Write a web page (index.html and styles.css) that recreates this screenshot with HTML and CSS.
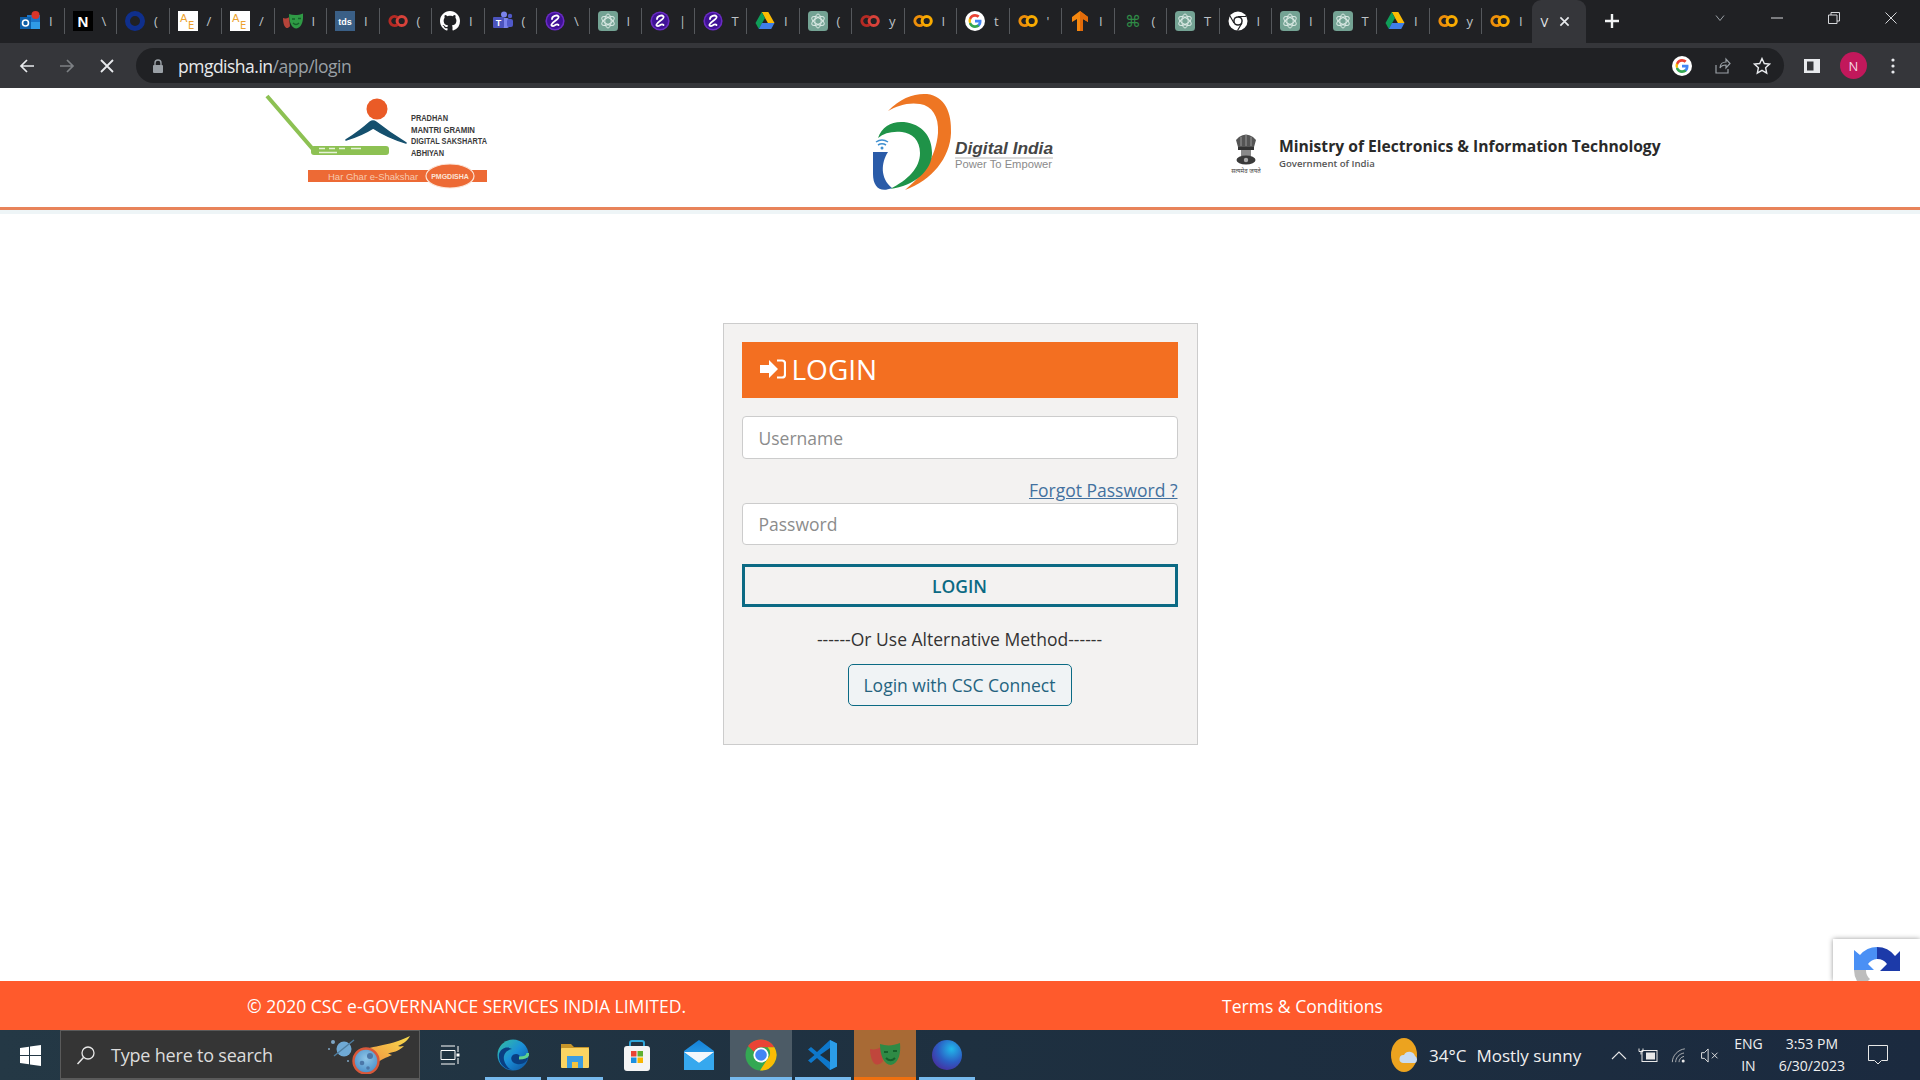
FILE: index.html
```html
<!DOCTYPE html>
<html lang="en">
<head>
  <meta charset="UTF-8" />
  <title>PMGDISHA Login</title>
  <link rel="stylesheet" href="styles.css">
</head>
<body>
  <!-- shared icons -->
  <svg class="sprite" xmlns="http://www.w3.org/2000/svg">
    <defs>
      <linearGradient id="edgeGrad" x1="0" y1="0" x2="1" y2="1"><stop offset="0" stop-color="#35c1a0"/><stop offset=".5" stop-color="#1b8fd8"/><stop offset="1" stop-color="#0c4f9c"/></linearGradient>
      <linearGradient id="cometGrad" x1="1" y1="0" x2="0" y2="1"><stop offset="0" stop-color="#f7dc4d"/><stop offset="1" stop-color="#f07a3c"/></linearGradient>
      <radialGradient id="globeGrad" cx=".65" cy=".3" r=".8"><stop offset="0" stop-color="#21b8ea"/><stop offset=".55" stop-color="#2b5fc4"/><stop offset="1" stop-color="#4a2a9c"/></radialGradient>
      <radialGradient id="rockGrad" cx=".5" cy=".4" r=".7"><stop offset="0" stop-color="#8fc6e8"/><stop offset="1" stop-color="#3f86c4"/></radialGradient>
      <linearGradient id="mailGrad" x1="0" y1="0" x2="0" y2="1"><stop offset="0" stop-color="#1380d8"/><stop offset="1" stop-color="#3fb4f2"/></linearGradient>
    </defs>
    <symbol id="i-outlook" viewBox="0 0 20 20"><rect x="7" y="4" width="13" height="14" fill="#1a74c8"/><rect x="0" y="6" width="11" height="12" fill="#0f5fa8"/><circle cx="5.5" cy="12" r="3" fill="none" stroke="#fff" stroke-width="1.6"/><path d="M11 11h9v7H11z" fill="#2f9be6"/><circle cx="15.5" cy="4" r="4" fill="#d8352a"/></symbol>
    <symbol id="i-ring" viewBox="0 0 20 20"><circle cx="10" cy="10" r="7.5" fill="none" stroke="#0f2f8c" stroke-width="5"/></symbol>
    <symbol id="i-es" viewBox="0 0 20 20"><path d="M0 7c2 .8 4 .4 6-.8l1 9c-2 2-3 2-4 1.500C1 15.500 0 11 0 7z" fill="#b5443a"/><path d="M6 3c4 1.500 9 1.500 14-.5.5 7-1 14-6.500 15C8.500 17.500 6 10.500 6 3z" fill="#2f9a45"/><path d="M9 8h3M15 7.500h3" stroke="#16602a" stroke-width="1.500"/><path d="M10 12c2 2 4 2 6 0" fill="none" stroke="#16602a" stroke-width="1.500"/></symbol>
    <symbol id="i-colab-red" viewBox="0 0 20 20"><circle cx="13.700" cy="10" r="4.600" fill="none" stroke="#d8423a" stroke-width="3"/><path d="M9.700 6.700a4.600 4.600 0 1 0 0 6.600" fill="none" stroke="#b52a24" stroke-width="3"/></symbol>
    <symbol id="i-colab" viewBox="0 0 20 20"><circle cx="13.700" cy="10" r="4.600" fill="none" stroke="#f9ab00" stroke-width="3"/><path d="M9.700 6.700a4.600 4.600 0 1 0 0 6.600" fill="none" stroke="#ee8f0a" stroke-width="3"/></symbol>
    <symbol id="i-github" viewBox="0 0 16 16"><path fill="#fff" d="M8 0C3.58 0 0 3.58 0 8c0 3.54 2.29 6.53 5.47 7.59.4.07.55-.17.55-.38 0-.19-.01-.82-.01-1.49-2.01.37-2.53-.49-2.69-.94-.09-.23-.48-.94-.82-1.13-.28-.15-.68-.52-.01-.53.63-.01 1.08.58 1.23.82.72 1.21 1.87.87 2.33.66.07-.52.28-.87.51-1.07-1.78-.2-3.64-.89-3.64-3.95 0-.87.31-1.59.82-2.15-.08-.2-.36-1.02.08-2.12 0 0 .67-.21 2.2.82.64-.18 1.32-.27 2-.27.68 0 1.36.09 2 .27 1.53-1.04 2.2-.82 2.2-.82.44 1.1.16 1.92.08 2.12.51.56.82 1.27.82 2.15 0 3.07-1.87 3.75-3.65 3.95.29.25.54.73.54 1.48 0 1.07-.01 1.93-.01 2.2 0 .21.15.46.55.38A8.013 8.013 0 0016 8c0-4.42-3.58-8-8-8z"/></symbol>
    <symbol id="i-purple" viewBox="0 0 20 20"><circle cx="10" cy="10" r="9.600" fill="#6a2bc4"/><circle cx="10" cy="10" r="8" fill="#3f1196"/><path d="M7 8c0-3 5-4.500 6.500-2.500C15 8 8 10 6.500 13.500c-.5 1.500 1.500 2 3 1 1.500-1 3-1.500 4-.5" fill="none" stroke="#fff" stroke-width="1.800" stroke-linecap="round"/></symbol>
    <symbol id="i-gpt" viewBox="0 0 20 20"><rect width="20" height="20" rx="3.500" fill="#74a394"/><g fill="none" stroke="#d9e8e3" stroke-width="1"><ellipse cx="10" cy="10" rx="3.200" ry="7"/><ellipse cx="10" cy="10" rx="3.200" ry="7" transform="rotate(60 10 10)"/><ellipse cx="10" cy="10" rx="3.200" ry="7" transform="rotate(120 10 10)"/></g></symbol>
    <symbol id="i-drive" viewBox="0 0 20 20"><path d="M6.700 1h6.600l6.200 11h-6.600z" fill="#fbbc04"/><path d="M6.700 1 .5 12l3.300 6L10 7z" fill="#0f9d58"/><path d="M3.800 18h12.400l3.300-6H7z" fill="#3f7ee8"/></symbol>
    <symbol id="i-g" viewBox="0 0 20 20"><circle cx="10" cy="10" r="10" fill="#fff"/><path d="M16.500 10.200c0-.5 0-1-.1-1.400H10v2.700h3.700c-.2.9-.7 1.600-1.400 2.100v1.700h2.300c1.200-1.200 1.900-3 1.900-5.100z" fill="#4285f4"/><path d="M10 17c1.900 0 3.400-.6 4.600-1.700l-2.300-1.700c-.6.400-1.400.7-2.300.7-1.800 0-3.300-1.200-3.900-2.800H4.100v1.800C5.200 15.500 7.400 17 10 17z" fill="#34a853"/><path d="M6.100 11.500c-.3-.9-.3-1.900 0-2.800V6.900H4.100c-.8 1.600-.8 3.500 0 5.200z" fill="#fbbc05"/><path d="M10 5.800c1 0 1.900.4 2.600 1l2-2C13.400 3.700 11.800 3 10 3 7.400 3 5.200 4.500 4.100 6.900l2 1.800c.6-1.700 2.100-2.900 3.900-2.900z" fill="#ea4335"/></symbol>
    <symbol id="i-tf" viewBox="0 0 20 20"><path d="M10 0 2 6v5l5-3v12h6V8l5 3V6z" fill="#f5870f"/><path d="M10 0v20h3V8l5 3V6z" fill="#e26b0a"/></symbol>
    <symbol id="i-chrome-mono" viewBox="0 0 20 20"><circle cx="10" cy="10" r="9.500" fill="#fff"/><circle cx="10" cy="10" r="4.800" fill="#202124"/><circle cx="10" cy="10" r="3.300" fill="#fff"/><path d="M10 5.500h8M6 12l-4-7M14 12l-4.500 7.500" stroke="#202124" stroke-width="1.200"/></symbol>
    <symbol id="i-chrome" viewBox="0 0 32 32"><circle cx="16" cy="16" r="15.500" fill="#34a853"/><path d="M16 .5A15.500 15.500 0 0 1 29.400 8.300H16a7.700 7.700 0 0 0-7 4.400L3 7A15.500 15.500 0 0 1 16 .5z" fill="#ea4335"/><path d="M29.400 8.300A15.500 15.500 0 0 1 15 31.500l7.600-11.800a7.700 7.700 0 0 0 0-11.400z" fill="#fbbc04"/><circle cx="16" cy="16" r="7.600" fill="#fff"/><circle cx="16" cy="16" r="5.800" fill="#4285f4"/></symbol>
  </svg>

  <div class="tabstrip">
    <div class="tab"><svg class="favicon"><use href="#i-outlook"/></svg><span>I</span></div>
    <div class="tab"><svg class="favicon" viewBox="0 0 20 20"><rect width="20" height="20" fill="#000"/><text x="10" y="15.500" text-anchor="middle" class="sv-bold" font-size="15" fill="#fff">N</text></svg><span>\</span></div>
    <div class="tab"><svg class="favicon"><use href="#i-ring"/></svg><span>(</span></div>
    <div class="tab"><svg class="favicon" viewBox="0 0 20 20"><rect width="20" height="20" fill="#fff"/><text x="2" y="11" class="sv-reg" font-size="11" fill="#eda22e">A</text><text x="10" y="18" class="sv-reg" font-size="10" fill="#eda22e">E</text></svg><span>/</span></div>
    <div class="tab"><svg class="favicon" viewBox="0 0 20 20"><rect width="20" height="20" fill="#fff"/><text x="2" y="11" class="sv-reg" font-size="11" fill="#eda22e">A</text><text x="10" y="18" class="sv-reg" font-size="10" fill="#eda22e">E</text></svg><span>/</span></div>
    <div class="tab"><svg class="favicon"><use href="#i-es"/></svg><span>I</span></div>
    <div class="tab"><svg class="favicon" viewBox="0 0 20 20"><rect width="20" height="20" fill="#3a5f86"/><text x="10" y="13.500" text-anchor="middle" class="sv-bold" font-size="9" fill="#fff">tds</text></svg><span>I</span></div>
    <div class="tab"><svg class="favicon"><use href="#i-colab-red"/></svg><span>(</span></div>
    <div class="tab"><svg class="favicon"><use href="#i-github"/></svg><span>I</span></div>
    <div class="tab"><svg class="favicon" viewBox="0 0 20 20"><circle cx="11" cy="3.500" r="3" fill="#7b83eb"/><circle cx="17" cy="5" r="2.200" fill="#5059c9"/><rect x="7" y="7" width="9" height="10" rx="2" fill="#7b83eb"/><rect x="14" y="8" width="6" height="8" rx="2" fill="#5059c9"/><rect y="6" width="11" height="11" rx="1" fill="#4b53bc"/><text x="5.500" y="15" text-anchor="middle" class="sv-bold" font-size="9" fill="#fff">T</text></svg><span>(</span></div>
    <div class="tab"><svg class="favicon"><use href="#i-purple"/></svg><span>\</span></div>
    <div class="tab"><svg class="favicon"><use href="#i-gpt"/></svg><span>I</span></div>
    <div class="tab"><svg class="favicon"><use href="#i-purple"/></svg><span>|</span></div>
    <div class="tab"><svg class="favicon"><use href="#i-purple"/></svg><span>T</span></div>
    <div class="tab"><svg class="favicon"><use href="#i-drive"/></svg><span>I</span></div>
    <div class="tab"><svg class="favicon"><use href="#i-gpt"/></svg><span>(</span></div>
    <div class="tab"><svg class="favicon"><use href="#i-colab-red"/></svg><span>y</span></div>
    <div class="tab"><svg class="favicon"><use href="#i-colab"/></svg><span>I</span></div>
    <div class="tab"><svg class="favicon"><use href="#i-g"/></svg><span>t</span></div>
    <div class="tab"><svg class="favicon"><use href="#i-colab"/></svg><span>'</span></div>
    <div class="tab"><svg class="favicon"><use href="#i-tf"/></svg><span>I</span></div>
    <div class="tab"><svg class="favicon" viewBox="0 0 20 20"><text x="10" y="16" text-anchor="middle" class="sv-reg" font-size="16" fill="#2f8a46">⌘</text></svg><span>(</span></div>
    <div class="tab"><svg class="favicon"><use href="#i-gpt"/></svg><span>T</span></div>
    <div class="tab"><svg class="favicon"><use href="#i-chrome-mono"/></svg><span>I</span></div>
    <div class="tab"><svg class="favicon"><use href="#i-gpt"/></svg><span>I</span></div>
    <div class="tab"><svg class="favicon"><use href="#i-gpt"/></svg><span>T</span></div>
    <div class="tab"><svg class="favicon"><use href="#i-drive"/></svg><span>I</span></div>
    <div class="tab"><svg class="favicon"><use href="#i-colab"/></svg><span>y</span></div>
    <div class="tab"><svg class="favicon"><use href="#i-colab"/></svg><span>I</span></div>
    <div class="tab-active"><span>V</span>
      <svg class="tab-close" viewBox="0 0 12 12"><path d="M1.500 1.500l9 9M10.500 1.500l-9 9" stroke="#e8eaed" stroke-width="1.800"/></svg>
    </div>
    <svg class="new-tab" viewBox="0 0 16 16"><path d="M8 1v14M1 8h14" stroke="#f1f3f4" stroke-width="2.400"/></svg>
    <div class="window-btns">
      <svg viewBox="0 0 12 12"><path d="M2 3.500l4 5 4-5" fill="none" stroke="#9aa0a6" stroke-width="1"/></svg>
      <svg viewBox="0 0 12 12"><path d="M0 6h12" stroke="#d5d7da" stroke-width="1"/></svg>
      <svg viewBox="0 0 12 12"><path d="M.5 3h8.500v8.500H.5zM3 3V.5h8.500V9H9" fill="none" stroke="#d5d7da" stroke-width="1"/></svg>
      <svg viewBox="0 0 12 12"><path d="M.5.500l11 11M11.500.500l-11 11" stroke="#d5d7da" stroke-width="1"/></svg>
    </div>
  </div>

  <div class="toolbar">
    <svg class="nav-icon" viewBox="0 0 16 16"><path d="M15 8H2M8 2 2 8l6 6" fill="none" stroke="#e8eaed" stroke-width="1.700"/></svg>
    <svg class="nav-icon" viewBox="0 0 16 16"><path d="M1 8h13M8 2l6 6-6 6" fill="none" stroke="#7d8084" stroke-width="1.700"/></svg>
    <svg class="nav-icon" viewBox="0 0 16 16"><path d="M2 2l12 12M14 2 2 14" stroke="#e8eaed" stroke-width="1.800"/></svg>
    <div class="omnibox">
      <svg class="lock" viewBox="0 0 12 14"><path d="M3 6V4a3 3 0 0 1 6 0v2" fill="none" stroke="#9aa0a6" stroke-width="1.400"/><rect x="1" y="6" width="10" height="8" rx="1" fill="#9aa0a6"/></svg>
      <div class="url"><b>pmgdisha.in</b>/app/login</div>
      <svg class="omni-g"><use href="#i-g"/></svg>
      <svg class="omni-icon" viewBox="0 0 18 18"><path d="M3 8v8h12v-4M7 11c0-4 3-6 6-6V2l4 4.500L13 11V8c-3 0-5 1-6 3z" fill="none" stroke="#9aa0a6" stroke-width="1.200"/></svg>
      <svg class="omni-icon" viewBox="0 0 18 18"><path d="M9 1.500l2.300 5 5.200.6-3.900 3.600 1.100 5.300L9 13.300 4.300 16l1.100-5.300L1.500 7.100l5.200-.6z" fill="none" stroke="#e8eaed" stroke-width="1.400"/></svg>
    </div>
    <svg class="panel-icon" viewBox="0 0 18 18"><path d="M1 2h16v14H1z" fill="#e8eaed"/><path d="M4 4.500h6.500v9H4z" fill="#35363a"/></svg>
    <div class="avatar">N</div>
    <svg class="kebab" viewBox="0 0 4 16"><circle cx="2" cy="2" r="1.600" fill="#e8eaed"/><circle cx="2" cy="8" r="1.600" fill="#e8eaed"/><circle cx="2" cy="14" r="1.600" fill="#e8eaed"/></svg>
  </div>

  <header class="site-header">
    <svg class="logo-pmg" viewBox="0 0 250 105">
      <path d="M12 6 56 57q2 3 6 3h67" fill="none" stroke="#8dc153" stroke-width="4"/>
      <rect x="56" y="56" width="78" height="9" rx="3" fill="#8dc153"/>
      <path d="M64 58.500h6M74 58.500h6M84 58.500h6M96 58.500h10M64 62.500h18" stroke="#e6f2d8" stroke-width="1.400"/>
      <circle cx="122" cy="19" r="10.500" fill="#ea5b27"/>
      <path d="M91 50q14-9 24-18 3-2 6 0 14 11 30 21-18-5-33-15-11 7-27 12z" fill="#15506e" stroke="#15506e" stroke-width="1.500" stroke-linejoin="round"/>
      <g class="pmg-text">
        <text x="156" y="31" textLength="37" lengthAdjust="spacingAndGlyphs">PRADHAN</text>
        <text x="156" y="42.500" textLength="64" lengthAdjust="spacingAndGlyphs">MANTRI GRAMIN</text>
        <text x="156" y="54" textLength="76" lengthAdjust="spacingAndGlyphs">DIGITAL SAKSHARTA</text>
        <text x="156" y="66" textLength="33" lengthAdjust="spacingAndGlyphs">ABHIYAN</text>
      </g>
      <rect x="53" y="80" width="179" height="12" fill="#ed6a35"/>
      <text x="73" y="89.500" class="pmg-tagline">Har Ghar e-Shakshar</text>
      <ellipse cx="195" cy="86" rx="24" ry="12" fill="#ed6a35" stroke="#fbe4d6" stroke-width="1.200"/>
      <text x="195" y="89" text-anchor="middle" class="pmg-badge">PMGDISHA</text>
    </svg>
    <svg class="logo-di" viewBox="0 0 200 110">
      <path d="M28 23C40 10 55 5 67 6c18 2 25 19 24 39-1 25-19 47-46 57 17-14 31-32 33-57 1-17-6-27-18-29-12-2-23 2-32 7z" fill="#ee7623"/>
      <path d="M18 50c4-12 14-17 26-16 18 2 28 14 28 31 0 17-17 33-42 36 18-9 30-21 30-36 0-13-8-20-18-21-10-1-18 1-24 6z" fill="#1f9348"/>
      <path d="M13 64h15c-7 11-8 26 4 36-12 5-19-1-19-14z" fill="#2a5ba8"/>
      <path d="M16 54q6-4 12 0M18 57q4-2.500 8 0" fill="none" stroke="#3f8fd0" stroke-width="1.500"/>
      <circle cx="22" cy="60" r="1.500" fill="#3f8fd0"/>
      <text x="95" y="66" textLength="98" lengthAdjust="spacingAndGlyphs" class="di-name">Digital India</text>
      <path d="M95 70h98" stroke="#888" stroke-width=".6"/>
      <text x="95" y="80" textLength="97" lengthAdjust="spacingAndGlyphs" class="di-tagline">Power To Empower</text>
    </svg>
    <svg class="emblem" viewBox="0 0 36 42">
      <path d="M11 4q7-5 14 0l3 3-2 7H10L8 7z" fill="#555"/>
      <path d="M13 4v9M18 2v11M23 4v9" stroke="#999" stroke-width="1"/>
      <rect x="10" y="14" width="16" height="3" fill="#333"/>
      <path d="M13 17h10v6H13z" fill="#8a8a8a"/>
      <ellipse cx="18" cy="27" rx="9.500" ry="4.500" fill="#3a3a3a"/>
      <circle cx="18" cy="27" r="2.200" fill="#aaa"/>
      <text x="18" y="40" text-anchor="middle" class="emblem-text">सत्यमेव जयते</text>
    </svg>
    <div class="ministry">
      <div class="ministry-name">Ministry of Electronics &amp; Information Technology</div>
      <div class="ministry-sub">Government of India</div>
    </div>
  </header>

  <main class="page">
    <form class="login-card">
      <h2 class="login-title">
        <svg viewBox="0 0 26 20"><path d="M0 6h9V1l9 9-9 9v-5H0z" fill="#fff"/><path d="M17 1.500h5q3 0 3 3v11q0 3-3 3h-5" fill="none" stroke="#fff" stroke-width="2.200"/></svg>
        LOGIN
      </h2>
      <input class="field" type="text" placeholder="Username" />
      <div class="forgot-row"><a href="#">Forgot Password ?</a></div>
      <input class="field field-pass" type="text" placeholder="Password" />
      <button class="btn-login" type="button">LOGIN</button>
      <div class="alt-text">------Or Use Alternative Method------</div>
      <button class="btn-csc" type="button">Login with CSC Connect</button>
    </form>
    <div class="recaptcha">
      <svg viewBox="0 0 46 46">
        <path d="M23 0a23 23 0 0 0-17 8L0 3v20h20l-6-6a12 12 0 0 1 9-5z" fill="#4a90f5"/>
        <path d="M23 0a23 23 0 0 1 18 9l5-5v20H26l7-7a12 12 0 0 0-10-5z" fill="#1c3aa9"/>
        <path d="M0 23h12a11 11 0 0 0 4 9L8 40A23 23 0 0 1 0 23z" fill="#bdbdbd"/>
      </svg>
    </div>
  </main>

  <footer class="site-footer">
    <div class="copyright">© 2020 CSC e-GOVERNANCE SERVICES INDIA LIMITED.</div>
    <div>Terms &amp; Conditions</div>
  </footer>

  <div class="taskbar">
    <svg class="start" viewBox="0 0 21 21"><path d="M0 3l9-1.300V10H0zM10 1.500 21 0v10H10zM0 11h9v8.300L0 18zM10 11h11v10l-11-1.500z" fill="#fff"/></svg>
    <div class="search">
      <svg class="search-icon" viewBox="0 0 20 20"><circle cx="12" cy="8" r="6" fill="none" stroke="#e8e8e8" stroke-width="1.300"/><path d="M7.500 12.500 1.500 19" stroke="#e8e8e8" stroke-width="1.500"/></svg>
      <span class="search-text">Type here to search</span>
      <svg class="meteor" viewBox="0 0 90 38">
        <circle cx="7" cy="6" r="2" fill="#7fa6c4"/><circle cx="3" cy="13" r="1" fill="#7fa6c4"/><circle cx="22" cy="25" r="1" fill="#7fa6c4"/>
        <circle cx="18" cy="13" r="7.500" fill="#6fa9d4"/><path d="M8 20 28 4" stroke="#4f7d9e" stroke-width="1.500"/>
        <path d="M30 18C45 8 60 12 84 0c-3 6-8 8-12 10 2 1 4 0 6 0-5 5-12 7-16 7 2 1 3 2 4 2-6 3-11 4-16 9-3 3-6 8-10 10z" fill="url(#cometGrad)"/>
        <circle cx="40" cy="25" r="12.500" fill="url(#rockGrad)" stroke="#d9583a" stroke-width="2.400"/>
        <circle cx="44" cy="20" r="3" fill="#4b77a8"/><circle cx="36" cy="27" r="2.300" fill="#4b77a8"/><circle cx="42" cy="32" r="1.800" fill="#4b77a8"/>
      </svg>
    </div>
    <svg class="task-view" viewBox="0 0 20 20"><path d="M1 1h14M1 19h14M1 5.500h14v9H1zM18 1v6M18 13v6" fill="none" stroke="#fff" stroke-width="1"/><rect x="16.500" y="8.500" width="3" height="3" fill="#fff"/></svg>
    <div class="task-apps">
      <div class="app open">
        <svg viewBox="0 0 32 32"><circle cx="16" cy="16" r="15.500" fill="url(#edgeGrad)"/><path d="M31 19c-1 4-6 7-11 6-5-1-7-5-5-8 1-2 5-3 7-1 1 1 1 2 0 3h9zM15 31C7 30 1 24 2 15c2-6 8-8 13-5-6 1-9 6-8 11 1 5 5 9 8 10z" fill="#0a3f82"/><path d="M22 19c6 0 9-2 9-5" fill="none" stroke="#5fd38d" stroke-width="3"/></svg>
      </div>
      <div class="app open">
        <svg viewBox="0 0 32 32"><path d="M2 5h10l3 3h15v20H2z" fill="#c6952a"/><rect x="2" y="9" width="28" height="20" rx="1" fill="#fbd462"/><path d="M8 29V17h16v12h-5v-6h-6v6z" fill="#3c9ce0"/><rect x="13" y="23" width="6" height="6" fill="#f5c33d"/></svg>
      </div>
      <div class="app">
        <svg viewBox="0 0 32 32"><path d="M9 8V4q0-2 2-2h10q2 0 2 2v4" fill="none" stroke="#2fa5d8" stroke-width="2"/><rect x="3" y="7" width="26" height="25" rx="3" fill="#f4f4f4"/><rect x="10" y="12" width="5.500" height="5.500" fill="#ea4335"/><rect x="16.500" y="12" width="5.500" height="5.500" fill="#5fb030"/><rect x="10" y="18.500" width="5.500" height="5.500" fill="#1a8fe0"/><rect x="16.500" y="18.500" width="5.500" height="5.500" fill="#f7b500"/></svg>
      </div>
      <div class="app">
        <svg viewBox="0 0 32 32"><path d="M1 12 16 1l15 11v19H1z" fill="url(#mailGrad)"/><path d="M1 13h30L16 24z" fill="#f2f7fb"/><path d="M1 14v17h30V14L16 24z" fill="#36a8ee"/></svg>
      </div>
      <div class="app app-chrome open"><svg viewBox="0 0 32 32"><use href="#i-chrome"/></svg></div>
      <div class="app open">
        <svg viewBox="0 0 32 32"><path d="M23 1 30 4.500v23L23 31 10 19l-6 5-3-2.500L7.500 16 1 10.500 4 8l6 5z" fill="#0e78cc"/><path d="M23 9 13 16l10 7z" fill="#1e2f3c"/><path d="M23 1 30 4.500v23L23 31z" fill="#2b9de8"/></svg>
      </div>
      <div class="app app-mask">
        <svg viewBox="0 0 32 32"><path d="M1 10c4 1 8 0 11-2l2 14c-3 4-6 4-8 3-3-2-5-9-5-15z" fill="#c0463c"/><path d="M11 5c6 2 13 2 20-1 1 10-1 20-9 22-7 0-11-10-11-21z" fill="#2f8a45"/><path d="M15 13h4M24 12h4" stroke="#16602a" stroke-width="2"/><path d="M17 19c3 3 6 3 9 0" fill="none" stroke="#16602a" stroke-width="2"/></svg>
      </div>
      <div class="app open">
        <svg viewBox="0 0 32 32"><circle cx="16" cy="16" r="15" fill="url(#globeGrad)"/></svg>
      </div>
    </div>
    <div class="tray">
      <div class="weather">
        <svg class="weather-icon" viewBox="0 0 28 34"><ellipse cx="13" cy="17" rx="13" ry="17" fill="#eca31f"/><path d="M12 25a4 4 0 0 1 1-8 6 6 0 0 1 11 1 4 4 0 0 1 0 7z" fill="#c9dcf2"/></svg>
        <span>34°C</span><span>Mostly sunny</span>
      </div>
      <svg class="tray-chevron" viewBox="0 0 16 10"><path d="M1 9l7-7 7 7" fill="none" stroke="#e8e8e8" stroke-width="1.100"/></svg>
      <svg class="tray-icon" viewBox="0 0 20 14"><rect x="4" y="2" width="15" height="11" fill="none" stroke="#e8e8e8"/><rect x="8" y="4" width="9" height="7" fill="#e8e8e8"/><path d="M1 0v3h4V0M3 3v3" stroke="#e8e8e8" fill="none"/></svg>
      <svg class="tray-icon" viewBox="0 0 18 18"><path d="M1 17C1 9 8 2 16 1M5 17c0-5 4-10 10-11M9 17c0-3 2-6 6-7" fill="none" stroke="#c8c8c8"/><circle cx="14" cy="15.500" r="1.800" fill="#e8e8e8"/></svg>
      <svg class="tray-icon tray-vol" viewBox="0 0 20 16"><path d="M1 5h3l4-4v14l-4-4H1z" fill="none" stroke="#e8e8e8"/><path d="M12 5l6 6M18 5l-6 6" stroke="#e8e8e8"/></svg>
      <div class="lang"><div>ENG</div><div>IN</div></div>
      <div class="clock"><div>3:53 PM</div><div>6/30/2023</div></div>
      <svg class="notif" viewBox="0 0 20 20"><path d="M.5.500h19v15h-6l-3.500 3.500-3.500-3.500h-6z" fill="none" stroke="#e8e8e8"/></svg>
    </div>
  </div>
</body>
</html>
```

FILE: styles.css
```css
* {
  box-sizing: border-box;
}

html, body {
  height: 100%;
}

body {
  margin: 0;
  display: flex;
  flex-direction: column;
  overflow: hidden;
  background-color: #fff;
  font-family: "Open Sans", "Noto Sans", sans-serif;
  color: #333;
}

.sprite {
  display: block;
  width: 0;
  height: 0;
  flex: none;
}

.sv-bold {
  font-family: "Liberation Sans", sans-serif;
  font-weight: bold;
}

.sv-reg {
  font-family: "DejaVu Sans", sans-serif;
}

/* browser tabs */
.tabstrip {
  height: 43px;
  flex: none;
  display: flex;
  padding-left: 12px;
  background-color: #202124;
  color: #bdc1c6;
  font-size: 13px;
}

.tab {
  width: 52.5px;
  height: 42px;
  flex: none;
  display: flex;
  align-items: center;
  gap: 9px;
  padding-left: 8px;
  border-right: 1px solid #55585c;
  border-image: linear-gradient(#202124 20%, #55585c 20%, #55585c 80%, #202124 80%) 1;
  overflow: hidden;
}

.favicon {
  width: 20px;
  height: 20px;
  flex: none;
}

.tab-active {
  width: 54px;
  height: 43px;
  flex: none;
  display: flex;
  align-items: center;
  gap: 11px;
  margin-left: -3px;
  padding-left: 9px;
  border-radius: 9px 9px 0 0;
  background-color: #35363a;
  color: #e8eaed;
}

.tab-close {
  width: 11px;
  height: 11px;
}

.new-tab {
  width: 16px;
  height: 16px;
  margin: 13px 0 0 18px;
}

.window-btns {
  margin-left: auto;
  display: flex;
  gap: 45px;
  padding: 12px 23px 0 0;
}

.window-btns svg {
  width: 12px;
  height: 12px;
}

/* address bar */
.toolbar {
  height: 45px;
  flex: none;
  display: flex;
  align-items: center;
  padding: 0 22px 0 19px;
  background-color: #35363a;
}

.nav-icon {
  width: 16px;
  height: 16px;
  margin-right: 24px;
}

.omnibox {
  width: 1648px;
  height: 35px;
  margin-left: -3px;
  display: flex;
  align-items: center;
  padding-left: 16px;
  border-radius: 18px;
  background-color: #202124;
  color: #9aa0a6;
  font-size: 17.5px;
}

.lock {
  width: 12px;
  height: 14px;
  margin-right: 14px;
}

.url {
  flex: 1;
  letter-spacing: -0.5px;
}

.url b {
  font-weight: 400;
  color: #e8eaed;
}

.omni-g {
  width: 20px;
  height: 20px;
  margin-right: 21px;
}

.omni-icon {
  width: 18px;
  height: 18px;
  margin-right: 22px;
}

.omni-icon:last-child {
  margin-right: 13px;
}

.panel-icon {
  width: 18px;
  height: 18px;
  margin-left: 19px;
}

.avatar {
  width: 27px;
  height: 27px;
  margin-left: 19px;
  display: flex;
  align-items: center;
  justify-content: center;
  border-radius: 50%;
  background-color: #c2185b;
  color: #f5d5e2;
  font-size: 13px;
}

.kebab {
  width: 4px;
  height: 16px;
  margin-left: 24px;
}

/* site header */
.site-header {
  height: 122px;
  flex: none;
  display: flex;
  align-items: flex-start;
  padding-left: 255px;
  border-bottom: 3px solid #e8835a;
  box-shadow: 0 4px 0 #eef5f7;
}

.logo-pmg {
  width: 250px;
  height: 105px;
  margin-top: 2px;
}

.pmg-text text {
  font-family: "Liberation Sans", sans-serif;
  font-weight: bold;
  font-size: 9.5px;
  fill: #3a3a3a;
}

.pmg-tagline {
  font-family: "Liberation Sans", sans-serif;
  font-size: 9.5px;
  fill: #f7c9ad;
}

.pmg-badge {
  font-family: "Liberation Sans", sans-serif;
  font-weight: bold;
  font-size: 7px;
  fill: #fbe4d6;
}

.logo-di {
  width: 200px;
  height: 110px;
  margin-left: 355px;
}

.di-name {
  font-family: "Liberation Sans", sans-serif;
  font-style: italic;
  font-weight: bold;
  font-size: 17px;
  fill: #454545;
}

.di-tagline {
  font-family: "Liberation Sans", sans-serif;
  font-size: 11px;
  fill: #8a8a8a;
}

.emblem {
  width: 36px;
  height: 42px;
  margin: 45px 0 0 168px;
}

.emblem-text {
  font-family: "DejaVu Sans", "Noto Sans", sans-serif;
  font-size: 6px;
  fill: #444;
}

.ministry {
  margin: 47px 0 0 15px;
}

.ministry-name {
  font-size: 15.65px;
  line-height: 22px;
  font-weight: 700;
  color: #2a2a2a;
  white-space: nowrap;
}

.ministry-sub {
  font-size: 9.6px;
  line-height: 14px;
  font-weight: 600;
  color: #555;
}

/* login card */
.page {
  flex: 1;
  position: relative;
  display: flex;
  justify-content: center;
  align-items: flex-start;
  padding-top: 113px;
}

.login-card {
  width: 475px;
  display: flex;
  flex-direction: column;
  padding: 18px 19px 38px 18px;
  border: 1px solid #cccccc;
  background-color: #f3f2f1;
  font-size: 17.5px;
}

.login-title {
  height: 56px;
  margin: 0 0 18px;
  display: flex;
  align-items: center;
  gap: 6px;
  padding: 0 0 2px 18px;
  background-color: #f36f21;
  color: #fff;
  font-size: 28px;
  font-weight: 400;
}

.login-title svg {
  width: 26px;
  height: 20px;
}

.field {
  height: 43px;
  padding: 0 16px;
  border: 1px solid #cccccc;
  border-radius: 4px;
  background-color: #fff;
  font-family: inherit;
  font-size: 17.5px;
}

.field::placeholder {
  color: #8c8c8c;
}

.field-pass {
  height: 42px;
}

.forgot-row {
  height: 44px;
  display: flex;
  justify-content: flex-end;
  align-items: flex-end;
  padding-bottom: 1px;
  line-height: 24px;
}

.forgot-row a {
  color: #43719f;
}

.btn-login {
  height: 43px;
  margin-top: 19px;
  border: 3px solid #0b6a84;
  background-color: transparent;
  color: #0b6a84;
  font-family: inherit;
  font-size: 17.5px;
  font-weight: 600;
}

.alt-text {
  height: 57px;
  padding-top: 19px;
  text-align: center;
  line-height: 26px;
  color: #333;
}

.btn-csc {
  width: 224px;
  height: 42px;
  align-self: center;
  padding: 0;
  border: 1px solid #0b6a84;
  border-radius: 5px;
  background-color: #f0f3f5;
  color: #25637f;
  font-family: inherit;
  font-size: 17.5px;
}

.recaptcha {
  position: absolute;
  right: 0;
  bottom: 0;
  width: 87px;
  height: 42px;
  padding: 8px 0 0 21px;
  overflow: hidden;
  background-color: #fff;
  box-shadow: 0 0 5px #999;
}

.recaptcha svg {
  display: block;
  width: 46px;
  height: 46px;
}

/* footer */
.site-footer {
  height: 49px;
  flex: none;
  display: flex;
  align-items: center;
  padding-left: 247px;
  position: relative;
  background-color: #ff5a2c;
  color: #fff;
  font-size: 17.55px;
}

.copyright {
  width: 975px;
}

/* windows taskbar */
.taskbar {
  height: 50px;
  flex: none;
  display: flex;
  align-items: center;
  background: linear-gradient(90deg, #243845, #1e3040 50%, #1b2a3f);
  color: #f0f0f0;
}

.start {
  width: 21px;
  height: 21px;
  margin: 0 19px 0 20px;
}

.search {
  width: 360px;
  height: 50px;
  display: flex;
  align-items: center;
  padding-left: 15px;
  border: 1px solid #5a5a5a;
  border-bottom-width: 2px;
  background-color: #353535;
  color: #dcdcdc;
}

.search-icon {
  width: 20px;
  height: 20px;
}

.search-text {
  width: 215px;
  margin-left: 15px;
  white-space: nowrap;
  font-size: 18px;
  letter-spacing: -0.2px;
}

.meteor {
  width: 90px;
  height: 38px;
}

.task-view {
  width: 20px;
  height: 20px;
  margin-left: 20px;
}

.task-apps {
  height: 50px;
  display: flex;
  margin-left: 22px;
}

.app {
  width: 62px;
  display: flex;
  align-items: center;
  justify-content: center;
  border-bottom: 3px solid transparent;
}

.app svg {
  width: 32px;
  height: 32px;
  margin-top: 3px;
}

.app.open {
  border-image: linear-gradient(90deg, transparent 6px, #76b9ed 6px, #76b9ed 56px, transparent 56px) 3;
}

.app-chrome {
  background-color: #4c5b66;
  border-image: none !important;
  border-bottom-color: #76b9ed;
}

.app-mask {
  background-color: #a86a35;
  border-bottom-color: #f07010;
}

.tray {
  margin-left: auto;
  display: flex;
  align-items: center;
  padding-right: 32px;
  font-size: 17px;
}

.weather {
  display: flex;
  align-items: center;
  gap: 10px;
  margin-right: 30px;
  white-space: nowrap;
}

.weather-icon {
  width: 28px;
  height: 34px;
}

.tray-chevron {
  width: 16px;
  height: 10px;
  margin-right: 11px;
}

.tray-icon {
  width: 20px;
  height: 15px;
  margin-right: 11px;
}

.tray-vol {
  margin-right: 14px;
}

.lang,
.clock {
  text-align: center;
  font-size: 14px;
  line-height: 22px;
}

.clock {
  margin-left: 16px;
}

.notif {
  width: 20px;
  height: 20px;
  margin-left: 23px;
}
```
